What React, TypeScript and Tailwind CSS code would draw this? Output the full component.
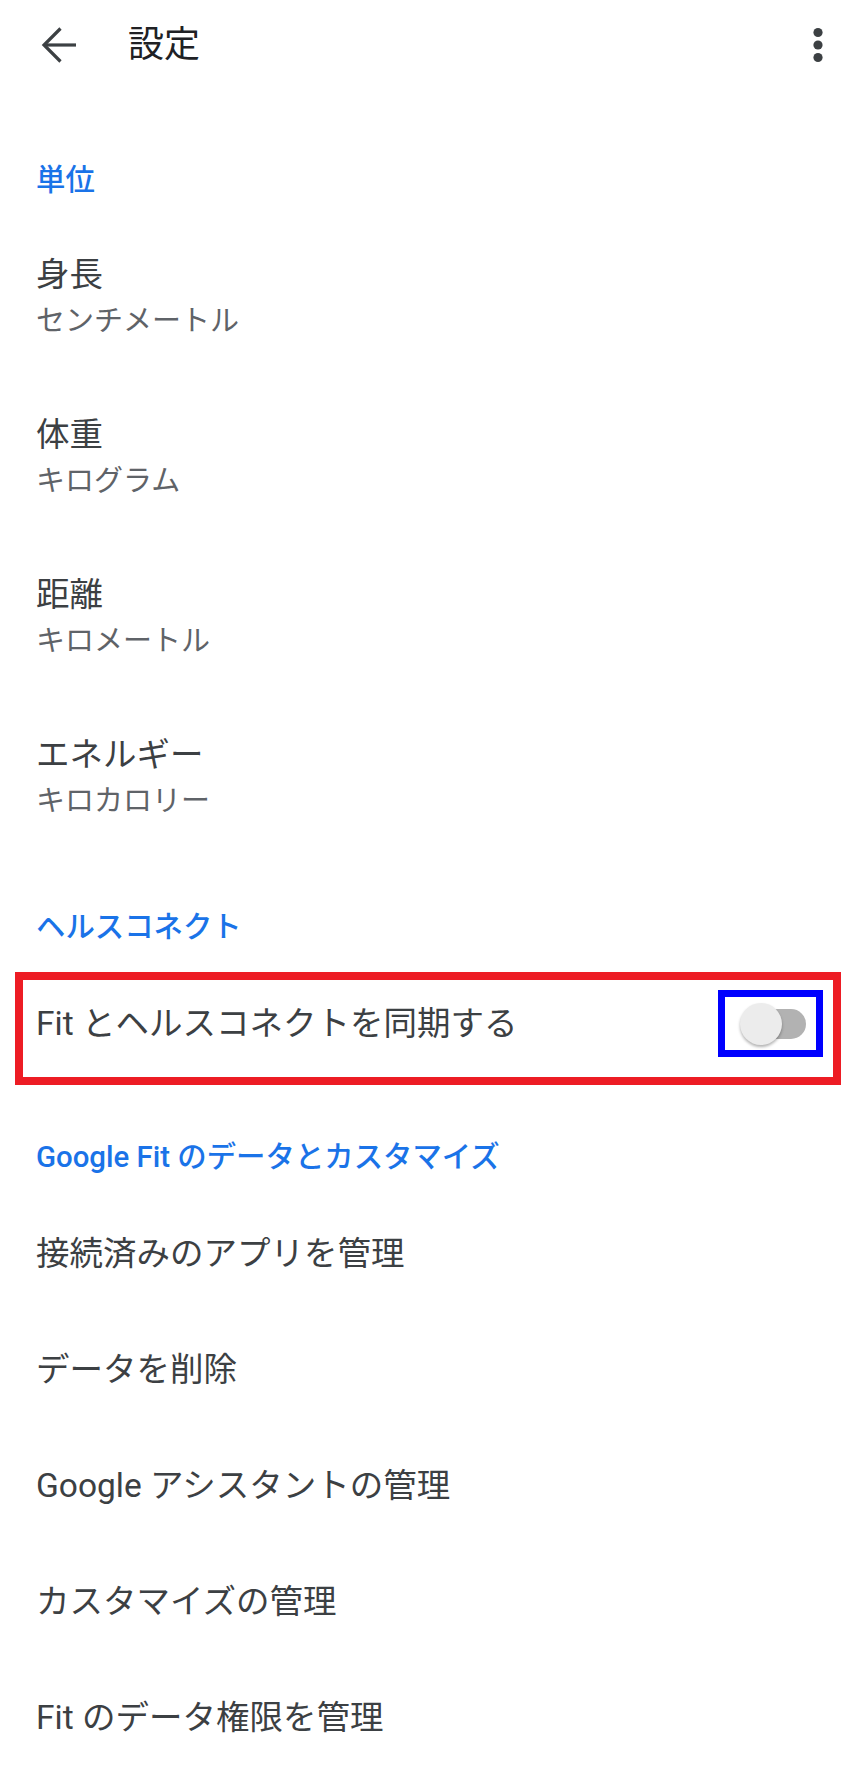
import React from 'react';

const FONT = 'font-[Roboto,"Noto_Sans_CJK_JP",sans-serif]';

type Unit = { title: string; value: string };

const units: Unit[] = [
  { title: '身長', value: 'センチメートル' },
  { title: '体重', value: 'キログラム' },
  { title: '距離', value: 'キロメートル' },
  { title: 'エネルギー', value: 'キロカロリー' },
];

const dataItems = [
  '接続済みのアプリを管理',
  'データを削除',
  'Google アシスタントの管理',
  'カスタマイズの管理',
  'Fit のデータ権限を管理',
];

function BackArrow() {
  return (
    <svg width="36" height="36" viewBox="0 0 36 36" fill="none" stroke="#3c4043" strokeWidth="3.2" strokeLinecap="butt" strokeLinejoin="miter">
      <path d="M3 18H35" />
      <path d="M19.5 1.5L3 18L19.5 34.5" />
    </svg>
  );
}

function MoreDots() {
  return (
    <svg width="12" height="40" viewBox="0 0 12 40" fill="#3c4043">
      <circle cx="6" cy="7.5" r="4.6" />
      <circle cx="6" cy="20" r="4.6" />
      <circle cx="6" cy="32.5" r="4.6" />
    </svg>
  );
}

function Toggle() {
  return (
    <div className="relative ml-[15px] h-[42px] w-[66px]">
      <div className="absolute left-[6px] top-[6px] h-[30px] w-[60px] rounded-full bg-[#b2b2b2]" />
      <div className="absolute left-0 top-0 h-[42px] w-[42px] rounded-full bg-[#ececec] shadow-[0_2px_3px_rgba(0,0,0,0.3)]" />
    </div>
  );
}

export default function App() {
  return (
    <main className={`w-[864px] bg-white ${FONT}`}>
      {/* toolbar */}
      <header className="flex h-[90px] items-center">
        <div className="ml-[41px]">
          <BackArrow />
        </div>
        <h1 className="ml-[51px] text-[36px] leading-none text-[#202124]">設定</h1>
        <div className="flex-1" />
        <div className="mr-[40px]">
          <MoreDots />
        </div>
      </header>

      {/* 単位 */}
      <div className="mt-[52px] flex h-[76px] items-center pl-[36px] text-[29.4px] font-medium text-[#1a73e8]">
        単位
      </div>
      {units.map((u) => (
        <div key={u.title} className="flex h-[160px] flex-col justify-center pl-[36px]">
          <div className="text-[33.5px] leading-[46px] text-[#3c4043]">{u.title}</div>
          <div className="text-[29px] leading-[46px] text-[#5f6368]">{u.value}</div>
        </div>
      ))}

      {/* ヘルスコネクト */}
      <div className="pb-[25px] pl-[36px] pt-[49px] text-[29.4px] font-medium leading-[40px] text-[#1a73e8]">
        ヘルスコネクト
      </div>
      <div className="mx-[15px] mr-[23px] flex items-center border-[8px] border-[#ed1c24] pb-[20px] pl-[13px] pr-[10px] pt-[10px]">
        <div className="flex-1 text-[33.5px] leading-none text-[#3c4043]">Fit とヘルスコネクトを同期する</div>
        <div className="flex h-[67px] w-[105px] items-center border-[7px] border-[#0000ff]">
          <Toggle />
        </div>
      </div>

      {/* Google Fit */}
      <div className="pb-[19px] pl-[36px] pt-[52px] text-[29.4px] font-medium leading-[40px] text-[#1a73e8]">
        Google Fit のデータとカスタマイズ
      </div>
      {dataItems.map((t) => (
        <div key={t} className="flex h-[116px] items-center pl-[36px] text-[33.5px] leading-none text-[#3c4043]">
          {t}
        </div>
      ))}
    </main>
  );
}
